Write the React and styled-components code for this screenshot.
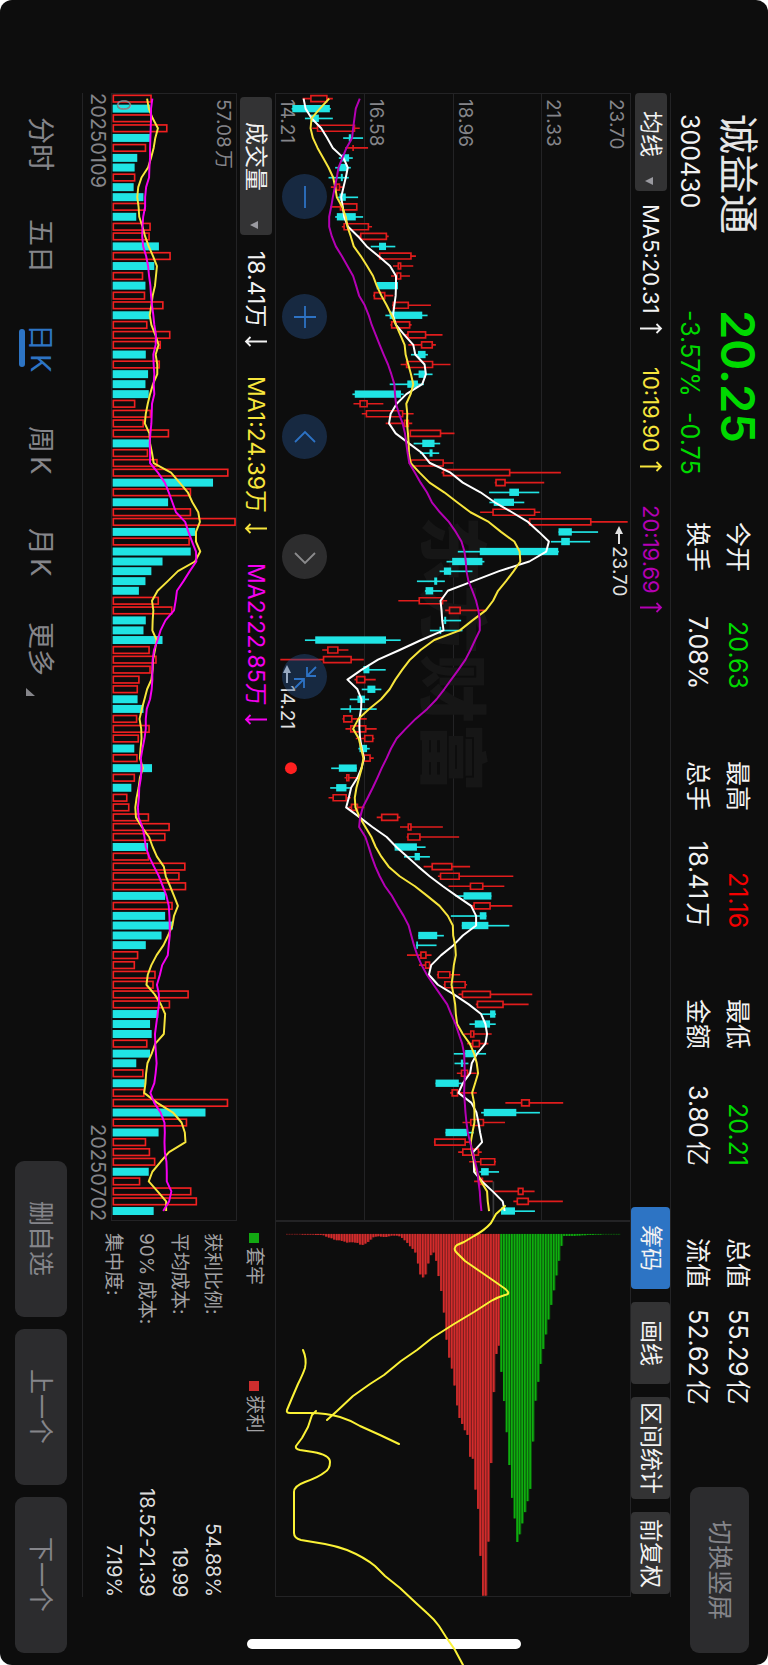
import React from "react";
import styled, { createGlobalStyle, css } from "styled-components";

/* ---------- theme values ---------- */

const c = {
  bg: "#0d0d0d",
  line: "#232325",
  text: "#f2f2f2",
  dim: "#85858a",
  button: "#2c2c2e",
  chipButton: "#333334",
  blue: "#2d74c4",
  up: "#e01c1c",
  down: "#20e4e4",
  green: "#00d900",
  red: "#f40000",
  yellow: "#f7e53c",
  purple: "#b400b4",
  magenta: "#f500f0",
};

/* ---------- chart data ---------- */

// One row per trading day: low, body start, body end, high, falling (1) or rising (0).
const CANDLES = [
  [80,103,155,171,0],[47,49,162,165,1],[87,105,129,171,1],[109,123,238,252,0],[202,219,226,262,1],
  [208,230,234,277,0],[189,198,220,231,1],[178,190,214,225,1],[158,195,201,219,1],[165,180,193,205,0],
  [187,191,210,247,1],[167,192,245,245,0],[178,183,240,262,1],[198,203,280,289,0],[245,253,334,339,0],
  [285,310,331,359,1],[305,310,408,421,0],[352,366,377,413,0],[346,362,377,403,0],[303,303,367,367,1],
  [292,294,329,353,0],[349,351,400,466,0],[329,342,440,456,1],[344,346,404,408,0],[388,395,452,501,0],
  [398,436,472,481,0],[406,427,450,457,1],[375,391,473,525,0],[414,429,450,471,1],[342,395,427,445,1],
  [230,237,376,384,1],[233,251,276,323,0],[258,270,383,414,0],[330,385,400,410,0],[402,402,497,537,0],
  [414,440,477,494,1],[433,462,471,491,1],[399,405,505,534,0],[498,502,705,857,0],[658,660,691,807,0],
  [641,702,731,792,1],[642,655,716,747,1],[614,651,780,795,0],[759,761,949,1058,0],[850,850,890,969,1],
  [827,858,884,945,1],[547,613,849,851,1],[513,530,621,627,1],[492,505,527,591,1],[424,476,485,508,1],
  [448,450,473,501,1],[368,429,503,515,0],[509,520,556,629,0],[502,506,512,557,1],[463,492,497,561,1],
  [87,118,331,375,1],[139,154,188,218,0],[13,141,228,264,0],[260,263,281,330,1],[236,241,269,300,0],
  [258,275,299,317,1],[222,245,268,280,1],[194,221,226,303,1],[200,202,230,273,0],[209,223,272,303,0],
  [240,265,293,296,0],[248,251,274,282,1],[260,263,285,294,0],[166,189,243,243,1],[206,211,221,245,0],
  [163,181,212,228,1],[158,170,213,225,0],[218,225,247,266,0],[303,316,368,374,0],[373,396,408,502,0],
  [393,395,435,551,0],[357,357,424,450,1],[385,417,433,463,1],[444,468,531,584,0],[487,493,553,714,0],
  [519,583,624,687,0],[540,564,648,648,1],[588,594,646,711,0],[526,613,633,633,1],[559,559,639,702,1],
  [428,428,485,505,1],[421,422,427,483,1],[394,434,453,468,0],[430,448,464,469,0],[484,486,525,554,0],
  [504,506,571,575,0],[549,559,647,771,0],[601,604,685,760,0],[617,644,660,662,1],[582,598,644,661,1],
  [566,584,597,649,0],[575,590,614,639,0],[535,569,602,632,1],[537,556,563,579,1],[544,556,578,604,0],
  [480,480,550,559,1],[524,528,548,604,0],[690,737,764,864,0],[617,625,723,794,1],[561,584,626,689,0],
  [510,510,575,595,1],[475,476,571,583,0],[548,560,611,619,0],[581,614,660,662,0],[612,617,640,671,1],
  [596,611,623,652,0],[657,727,745,778,0],[714,724,761,863,0],[677,677,719,779,1],
];

const MA5 = [83,89,107,136,154,171,203,216,210,203,196,201,205,217,247,273,308,343,361,361,360,356,352,361,386,413,419,447,451,440,392,363,345,340,360,400,439,463,525,562,615,658,710,758,791,821,813,762,671,593,517,495,498,500,504,437,372,307,258,215,245,257,256,251,251,253,258,265,257,245,226,219,211,252,290,333,362,395,428,462,502,543,587,602,602,562,534,497,467,460,487,535,580,617,630,635,630,605,589,584,562,549,588,603,609,614,620,593,595,596,620,652,682,688];
const MA10 = [160,132,107,104,111,125,142,158,172,178,183,199,210,215,225,234,255,274,292,303,317,333,348,361,374,387,390,398,406,413,405,392,395,394,397,399,400,405,432,462,506,545,585,640,677,717,733,735,715,692,668,653,631,591,553,476,435,403,380,359,342,316,280,248,232,249,256,263,258,250,242,237,239,252,269,287,300,317,339,372,418,455,492,517,532,533,539,541,535,532,528,534,539,541,545,562,583,596,604,608,599,590,596,597,597,591,586,589,597,603,617,635,637,641];
const MA20 = [252,240,236,232,229,212,200,188,183,177,171,166,160,160,168,180,198,215,232,241,250,267,279,288,300,312,324,337,347,356,358,361,370,381,388,392,396,401,418,435,454,469,493,520,541,558,567,571,573,579,591,602,609,613,613,599,585,570,549,527,506,483,455,420,390,363,346,333,318,305,291,276,261,253,250,269,279,288,299,312,328,349,366,384,399,407,415,425,438,454,474,494,515,527,540,550,560,566,567,568,567,566,568,570,573,577,584,591,599,606,609,613,615,618];

const VOLUMES = [455,450,455,503,450,438,411,403,405,400,430,437,408,452,449,477,513,463,429,436,435,491,450,442,512,483,437,480,444,436,446,405,453,431,508,447,444,473,689,642,575,505,575,711,588,571,574,488,454,436,416,477,518,437,430,488,449,470,452,418,413,412,430,411,449,416,402,412,456,404,393,381,387,447,510,497,444,447,558,540,560,496,519,496,520,485,437,414,404,467,461,568,511,475,450,455,442,450,408,430,434,433,688,619,563,476,438,450,466,446,420,576,593,461];
const FALLING_DAYS = new Set([1,4,6,7,9,10,12,15,17,19,22,26,28,29,30,35,39,41,44,46,47,48,49,50,53,54,55,61,62,66,68,70,76,81,83,84,85,86,93,94,95,97,98,100,103,105,109,113]);
const VOL_MA1 = [441,446,458,474,466,461,453,444,424,414,411,415,417,427,435,446,459,471,468,465,458,454,449,454,466,476,467,472,472,459,450,443,437,434,448,450,456,461,514,540,565,579,597,602,590,590,603,587,535,504,473,456,460,458,457,470,465,459,458,454,441,433,425,418,423,424,421,419,428,419,415,409,405,407,425,447,458,471,492,498,511,523,535,523,518,505,491,470,454,443,439,464,483,496,494,492,466,455,442,438,436,432,472,520,546,556,558,508,482,457,446,473,499,499];
const VOL_MA2 = [457,453,453,452,451,450,450,448,447,438,435,435,429,427,426,429,438,444,447,451,453,456,460,463,468,467,460,461,463,461,463,456,455,454,451,449,450,450,474,495,507,518,529,557,567,578,590,591,571,552,532,528,523,497,482,473,462,458,457,457,455,450,440,437,437,433,427,422,424,422,417,416,413,415,427,433,437,447,462,477,489,500,507,509,510,510,507,504,487,480,471,477,477,473,469,465,466,468,470,467,463,451,463,482,494,495,494,495,500,501,501,515,508,490];

const CHIPS_PROFIT = [1,1,1,1,1,1,2,2,2,2,2,3,3,3,4,8,11,13,17,19,19,21,23,26,25,25,26,27,32,33,29,24,17,10,8,7,8,9,9,7,5,5,5,7,12,19,27,37,45,56,89,122,131,122,89,64,56,81,127,172,237,319,373,406,457,517,555,573,592,606,672,678,771,829,971,1091,1091,928,691,477,362,337];
const CHIPS_TRAPPED = [416,504,598,697,796,858,929,906,873,839,806,769,626,503,446,392,347,303,258,214,170,125,81,36,6,6,6,6,6,5,5,4,4,3,3,3,2,2,2,1,1,1,1,1,1,1];

const STEP = 29.586;
const dayY = (i) => Math.round(14 + i * STEP);
const toPoints = (values) => values.map((v, i) => `${v},${dayY(i)}`).join(" ");

/* ---------- page frame ---------- */

const Global = createGlobalStyle`
  * { box-sizing: border-box; }
  body { margin: 0; background: #fff; }
  button, select { font: inherit; color: inherit; border: 0; padding: 0; margin: 0; cursor: pointer; writing-mode: inherit; text-orientation: inherit; }
  dl, dt, dd, h1, p { margin: 0; font-weight: 400; }
`;

const Screen = styled.div`
  position: relative;
  writing-mode: vertical-rl;
  text-orientation: sideways;
  display: flex;
  flex-direction: column;
  inline-size: 100vh;
  min-inline-size: 1500px;
  block-size: 100vw;
  min-block-size: 640px;
  overflow: hidden;
  border-radius: 12px;
  background: ${c.bg};
  color: ${c.text};
  font-family: Inter, "Noto Sans CJK SC", sans-serif;
  font-size: 22px;
  line-height: 32px;
  white-space: nowrap;
`;

/* ---------- header ---------- */

const Header = styled.header`
  flex: none;
  display: flex;
  block-size: 97px;
  padding-inline: 114px 12px;
`;

const Title = styled.div`
  flex: none;
  inline-size: ${(p) => p.$w}px;
  padding-block-start: 6px;
`;

const StockName = styled.h1`
  font-size: 40px;
  line-height: 48px;
  color: #e6e6e6;
`;

const StockCode = styled.p`
  margin-block-start: 8px;
  font-size: 25px;
`;

const Price = styled.p`
  font-size: 47px;
  line-height: 48px;
  font-weight: 600;
  color: ${c.green};
`;

const Change = styled.p`
  display: flex;
  gap: 15px;
  margin-block-start: 8px;
  font-size: 25px;
  color: ${c.green};
`;

const Stats = styled.dl`
  flex: 1;
  display: flex;
  justify-content: space-between;
  padding-block-start: 10px;
  padding-inline-end: 82px;
  text-autospace: normal;
`;

const StatGroup = styled.div`
  inline-size: 167px;
`;

const Stat = styled.div`
  display: flex;
  justify-content: space-between;
  font-size: 25px;
  line-height: 40px;
  dd { color: ${(p) => p.$color || c.text}; }
`;

const GreyButton = styled.button`
  flex: none;
  inline-size: ${(p) => p.$w}px;
  block-size: ${(p) => p.$h}px;
  border-radius: 9px;
  background: ${c.button};
  color: ${c.dim};
  font-size: 25px;
`;

const SwitchSlot = styled.div`
  padding-block-start: 19px;
`;

/* ---------- content ---------- */

const Content = styled.main`
  flex: 1;
  min-block-size: 0;
  display: flex;
  flex-direction: column;
  margin-inline: 93px 68px;
  border-block: 1px solid ${c.line};
`;

const Bar = styled.div`
  flex: none;
  display: flex;
  align-items: center;
  gap: ${(p) => p.$gap}px;
  block-size: ${(p) => p.$h}px;
`;

const Picker = styled.label`
  position: relative;
  flex: none;
  inline-size: ${(p) => p.$w}px;
  block-size: 32px;
  margin-inline-start: ${(p) => p.$inset}px;
  svg {
    position: absolute;
    inset-block-start: 14px;
    inset-inline-end: 6px;
    pointer-events: none;
  }
`;

const PickerSelect = styled.select`
  appearance: none;
  inline-size: 100%;
  block-size: 100%;
  padding-inline-start: ${(p) => p.$pad}px;
  border-radius: 4px;
  background: ${c.chipButton};
  font-size: 23px;
  line-height: 32px;
`;

const Readings = styled.div`
  display: flex;
  gap: ${(p) => p.$gap}px;
  font-size: ${(p) => p.$size}px;
`;

const Reading = styled.span`
  display: flex;
  align-items: center;
  gap: 9px;
  color: ${(p) => p.$color};
`;

const Tools = styled.div`
  display: flex;
  align-self: stretch;
  gap: 13px;
  margin-inline: auto 3px;
`;

const ToolButton = styled.button`
  inline-size: ${(p) => (p.$wide ? 102 : 82)}px;
  border-radius: 4px;
  background: ${(p) => (p.$active ? c.blue : c.chipButton)};
  font-size: 23px;
`;

const Columns = styled.div`
  flex: 1;
  min-block-size: 0;
  display: flex;
`;

const ChartColumn = styled.section`
  flex: 3;
  display: flex;
  flex-direction: column;
`;

const SideColumn = styled.section`
  flex: 1;
  display: flex;
  flex-direction: column;
`;

const Plot = styled.div`
  position: relative;
  flex: 1;
  min-block-size: 0;
  display: flex;
  flex-direction: column;
  border: 1px solid ${c.line};
  font-size: 19px;
  line-height: 22px;
  color: ${c.dim};
`;

const VolumePlot = styled(Plot)`
  flex: none;
  block-size: 126px;
  justify-content: space-between;
  padding-inline-start: 5px;
  padding-block: 2px 0;
  text-autospace: normal;
  span { position: relative; }
`;

const Band = styled.div`
  flex: 1;
  display: flex;
  flex-direction: column;
  justify-content: space-between;
  padding-inline-start: 5px;
  padding-block: 3px 0;
  & + & { border-block-start: 1px solid ${c.line}; }
`;

const Watermark = styled.span`
  position: absolute;
  inset-block-start: 40%;
  inset-inline-start: 37.5%;
  font-size: 69px;
  line-height: 72px;
  font-weight: 900;
  color: #161616;
`;

const Layer = styled.svg`
  position: absolute;
  inset: 0;
  width: 100%;
  height: 100%;
  overflow: visible;
  pointer-events: none;
`;

const Note = styled.span`
  position: absolute;
  inset-inline-start: ${(p) => p.$at}%;
  inset-block-${(p) => p.$edge}: 0;
  display: flex;
  align-items: center;
  gap: 2px;
  color: #e2e2e2;
`;

const RoundButtons = styled.div`
  position: absolute;
  inset-block-end: 6px;
  inset-inline-start: 80px;
  display: flex;
  gap: 75px;
`;

const RoundButton = styled.button`
  inline-size: 45px;
  block-size: 45px;
  border-radius: 50%;
  display: grid;
  place-items: center;
  background: ${(p) => (p.$muted ? "rgba(95, 95, 98, 0.4)" : "rgba(40, 85, 145, 0.4)")};
  color: ${(p) => (p.$muted ? "#8b8b8d" : "#2d72c4")};
`;

const Dates = styled.div`
  flex: none;
  display: flex;
  justify-content: space-between;
  block-size: 28px;
  font-size: 20px;
  line-height: 26px;
  color: ${c.dim};
`;

const Details = styled.div`
  flex: none;
  block-size: 192px;
  padding-inline-start: 12px;
  font-size: 19px;
  line-height: 33px;
  color: #a2a2a4;
`;

const Legend = styled.div`
  display: flex;
  line-height: 42px;
  margin-block-end: 4px;
`;

const LegendItem = styled.span`
  inline-size: 148px;
  display: flex;
  align-items: center;
  gap: 4px;
  font-size: 19px;
  &::before {
    content: "";
    inline-size: 10px;
    block-size: 10px;
    background: ${(p) => p.$color};
  }
`;

const DetailRow = styled.div`
  display: flex;
  justify-content: space-between;
  dd { font-size: 20px; color: #dcdcdc; }
`;

/* ---------- footer ---------- */

const Footer = styled.footer`
  flex: none;
  display: flex;
  justify-content: space-between;
  align-items: center;
  block-size: 82px;
  padding-inline: 93px 12px;
`;

const Periods = styled.nav`
  display: flex;
  text-autospace: normal;
`;

const Period = styled.button`
  position: relative;
  inline-size: 102px;
  block-size: 44px;
  padding-block-start: 2px;
  padding-inline-end: ${(p) => (p.$more ? 11 : 0)}px;
  background: none;
  font-size: 27px;
  color: ${(p) => (p.$active ? c.blue : c.dim)};
  ${(p) =>
    p.$active &&
    css`
      &::after {
        content: "";
        position: absolute;
        inset-inline: 32px;
        inset-block-end: 0;
        block-size: 6px;
        border-radius: 3px;
        background: ${c.blue};
      }
    `}
  svg {
    position: absolute;
    inset-inline-end: 9px;
    inset-block-end: 7px;
  }
`;

const Pager = styled.div`
  display: flex;
  gap: 12px;
`;

const HomeBar = styled.div`
  position: absolute;
  inset-inline-end: 16px;
  inset-block-start: 32.2%;
  inline-size: 10px;
  block-size: 35.7%;
  border-radius: 5px;
  background: #fff;
`;

/* ---------- drawings ---------- */

const Caret = () => (
  <svg width="8" height="8" viewBox="0 0 8 8" aria-hidden="true">
    <path d="M0 4L8 0V8Z" fill="#9a9aa0" />
  </svg>
);

const Trend = ({ down }) => (
  <svg width="24" height="11" viewBox="0 0 24 11" fill="none" stroke="currentColor" strokeWidth="1.8" aria-hidden="true">
    {down ? <path d="M23 5.5H2M6.5 1L2 5.5L6.5 10" /> : <path d="M1 5.5H22M17.5 1L22 5.5L17.5 10" />}
  </svg>
);

const NoteArrow = () => (
  <svg width="10" height="18" viewBox="0 0 10 18" aria-hidden="true">
    <path d="M5 0L9 8H6V18H4V8H1Z" fill="currentColor" />
  </svg>
);

const ICONS = {
  out: "M15 4V26",
  in: "M15 4V26M4 15H26",
  prev: "M5 20L15 10L25 20",
  next: "M5 11L15 21L25 11",
  fit: "M17 5V14H26M17 14L26 5M4 17H14V26M14 17L5 26",
};

const RoundIcon = ({ name }) => (
  <svg width="30" height="30" viewBox="0 0 30 30" fill="none" stroke="currentColor" strokeWidth="1.8" aria-hidden="true">
    <path d={ICONS[name]} />
  </svg>
);

const Candle = ({ row, index }) => {
  const [low, start, end, high, falling] = row;
  const y = dayY(index);
  if (falling) {
    return (
      <g fill={c.down}>
        <rect x={low} y={y - 2} width={high - low} height="5" />
        <rect x={start} y={y - 11} width={end - start} height="22" />
      </g>
    );
  }
  return (
    <path
      d={`M${low} ${y}H${start}M${end} ${y}H${high}M${start + 2} ${y - 9}H${end - 2}V${y + 9}H${start + 2}Z`}
      fill="none"
      stroke={c.up}
      strokeWidth="5"
    />
  );
};

const PriceLayer = () => (
  <Layer viewBox="0 0 1065 3384" preserveAspectRatio="none" role="img" aria-label="日K线图">
    <path d="M654 3268V3384" stroke="#3a3a3c" strokeWidth="5" />
    {CANDLES.map((row, i) => (
      <Candle key={i} row={row} index={i} />
    ))}
    <g fill="none" strokeWidth="6" strokeLinejoin="round">
      <polyline points={toPoints(MA5)} stroke="#fff" />
      <polyline points={toPoints(MA10)} stroke={c.yellow} />
      <polyline points={toPoints(MA20)} stroke={c.purple} />
    </g>
    <circle cx="45" cy="2026" r="18" fill="#ff2020" />
  </Layer>
);

const VOLUME_BASE = 336;

const VolumeLayer = () => (
  <Layer viewBox="334 0 378 3384" preserveAspectRatio="none" role="img" aria-label="成交量">
    {VOLUMES.map((end, i) =>
      FALLING_DAYS.has(i) ? (
        <rect key={i} x={VOLUME_BASE} y={dayY(i) - 12} width={end - VOLUME_BASE} height="24" fill={c.down} />
      ) : (
        <rect key={i} x={VOLUME_BASE + 2} y={dayY(i) - 10} width={end - VOLUME_BASE - 4} height="20" fill="none" stroke="#f02020" strokeWidth="5" />
      )
    )}
    <g fill="none" strokeWidth="6" strokeLinejoin="round">
      <polyline points={toPoints(VOL_MA1)} stroke={c.yellow} />
      <polyline points={toPoints(VOL_MA2)} stroke={c.magenta} />
    </g>
  </Layer>
);

const CHIP_STEP = 7.87;

const ChipBars = ({ values, first, color, back }) => {
  const x = (i) => Math.round(30 + (first + i) * CHIP_STEP);
  return (
    <>
      {values.map((v, i) => (
        <g key={i}>
          <rect x={x(i)} y="36" width="8" height={v} fill={back} />
          <rect x={x(i)} y="36" width="5" height={v} fill={color} />
        </g>
      ))}
    </>
  );
};

const ChipLayer = () => (
  <Layer viewBox="0 0 1065 1128" preserveAspectRatio="none" role="img" aria-label="筹码分布">
    <ChipBars values={CHIPS_PROFIT} first={0} color="#d42c2c" back="#7c1f1f" />
    <ChipBars values={CHIPS_TRAPPED} first={CHIPS_PROFIT.length} color="#0fae0f" back="#0c580c" />
  </Layer>
);

const SketchLayer = () => (
  <Layer viewBox="0 0 768 1665" preserveAspectRatio="none" aria-hidden="true">
    <g fill="none" stroke="#fbf236" strokeWidth="2" strokeLinejoin="round" strokeLinecap="round">
      <path d="M505 1206L496 1214L491 1223Q485 1230 474 1236L464 1242L457 1245Q453 1248 456 1252L465 1261L481 1272L494 1281L504 1288Q512 1294 505 1295Q498 1297 491 1301L474 1312L454 1324L432 1338L417 1350L401 1361L384 1375L370 1384L353 1396L337 1411L327 1420" />
      <path d="M303 1350Q307 1359 305 1368Q303 1374 298 1384L292 1398L287 1410Q286 1413 290 1413H310Q326 1413 340 1417Q350 1420 360 1426L380 1435L399 1444" />
      <path d="M316 1411L312 1415L308 1427L302 1438L296 1446Q295 1449 300 1450L313 1452Q330 1455 330 1462Q330 1469 325 1472Q319 1477 305 1482Q294 1486 294 1492V1533Q294 1538 301 1540L325 1544Q336 1546 347 1550Q364 1557 375 1566L385 1576L400 1588L416 1603L427 1613Q434 1619 439 1626L446 1637L455 1650L463 1665" />
    </g>
  </Layer>
);

/* ---------- content data ---------- */

const STATS = [
  [["今开", "20.63", c.green], ["换手", "7.08%"]],
  [["最高", "21.16", c.red], ["总手", "18.41万"]],
  [["最低", "20.21", c.green], ["金额", "3.80亿"]],
  [["总值", "55.29亿"], ["流值", "52.62亿"]],
];

const ROUND = [["out", "缩小"], ["in", "放大"], ["prev", "左移"], ["next", "右移"], ["fit", "收起"]];

export default function App() {
  return (
    <Screen>
      <Global />
      <Header>
        <Title $w={196}>
          <StockName>诚益通</StockName>
          <StockCode>300430</StockCode>
        </Title>
        <Title $w={212}>
          <Price>20.25</Price>
          <Change>
            <span>-3.57%</span>
            <span>-0.75</span>
          </Change>
        </Title>
        <Stats>
          {STATS.map((group, i) => (
            <StatGroup key={i}>
              {group.map(([label, value, color]) => (
                <Stat key={label} $color={color}>
                  <dt>{label}</dt>
                  <dd>{value}</dd>
                </Stat>
              ))}
            </StatGroup>
          ))}
        </Stats>
        <SwitchSlot>
          <GreyButton $w={166} $h={59}>切换竖屏</GreyButton>
        </SwitchSlot>
      </Header>

      <Content>
        <Bar $gap={13} $h={39}>
          <Picker $w={98} $inset={0}>
            <PickerSelect $pad={18} aria-label="主图指标" defaultValue="均线">
              <option>均线</option>
            </PickerSelect>
            <Caret />
          </Picker>
          <Readings $gap={33} $size={22}>
            <Reading $color={c.text}>MA5:20.31<Trend /></Reading>
            <Reading $color={c.yellow}>10:19.90<Trend /></Reading>
            <Reading $color={c.purple}>20:19.69<Trend /></Reading>
          </Readings>
          <Tools>
            <ToolButton $active>筹码</ToolButton>
            <ToolButton>画线</ToolButton>
            <ToolButton $wide>区间统计</ToolButton>
            <ToolButton>前复权</ToolButton>
          </Tools>
        </Bar>

        <Columns>
          <ChartColumn>
            <Plot>
              <Band><span>23.70</span><span>21.33</span></Band>
              <Band><span /><span>18.96</span></Band>
              <Band><span /><span>16.58</span></Band>
              <Band><span /><span>14.21</span></Band>
              <Watermark>东方财富</Watermark>
              <PriceLayer />
              <Note $at={38.4} $edge="start"><NoteArrow />23.70</Note>
              <Note $at={50.7} $edge="end"><NoteArrow />14.21</Note>
              <RoundButtons>
                {ROUND.map(([name, label]) => (
                  <RoundButton key={name} $muted={name === "next"} aria-label={label}>
                    <RoundIcon name={name} />
                  </RoundButton>
                ))}
              </RoundButtons>
            </Plot>
            <Bar $gap={16} $h={38}>
              <Picker $w={138} $inset={4}>
                <PickerSelect $pad={25} aria-label="副图指标" defaultValue="成交量">
                  <option>成交量</option>
                </PickerSelect>
                <Caret />
              </Picker>
              <Readings $gap={29} $size={23}>
                <Reading $color={c.text}>18.41万<Trend down /></Reading>
                <Reading $color={c.yellow}>MA1:24.39万<Trend down /></Reading>
                <Reading $color={c.magenta}>MA2:22.85万<Trend down /></Reading>
              </Readings>
            </Bar>
            <VolumePlot>
              <VolumeLayer />
              <span>57.08万</span>
              <span>0</span>
            </VolumePlot>
            <Dates>
              <span>20250109</span>
              <span>20250702</span>
            </Dates>
          </ChartColumn>

          <SideColumn>
            <Plot>
              <ChipLayer />
            </Plot>
            <Details>
              <Legend>
                <LegendItem $color="#12a812">套牢</LegendItem>
                <LegendItem $color="#cf2e2e">获利</LegendItem>
              </Legend>
              <dl>
                <DetailRow><dt>获利比例:</dt><dd>54.88%</dd></DetailRow>
                <DetailRow><dt>平均成本:</dt><dd>19.99</dd></DetailRow>
                <DetailRow><dt>90% 成本:</dt><dd>18.52-21.39</dd></DetailRow>
                <DetailRow><dt>集中度:</dt><dd>7.19%</dd></DetailRow>
              </dl>
            </Details>
          </SideColumn>
        </Columns>
      </Content>

      <Footer>
        <Periods>
          <Period>分时</Period>
          <Period>五日</Period>
          <Period $active>日K</Period>
          <Period>周K</Period>
          <Period>月K</Period>
          <Period $more>
            更多
            <svg width="9" height="8" viewBox="0 0 9 8" aria-hidden="true">
              <path d="M0 0V8H9Z" fill="currentColor" />
            </svg>
          </Period>
        </Periods>
        <Pager>
          <GreyButton $w={156} $h={52}>删自选</GreyButton>
          <GreyButton $w={156} $h={52}>上一个</GreyButton>
          <GreyButton $w={156} $h={52}>下一个</GreyButton>
        </Pager>
      </Footer>

      <HomeBar />
      <SketchLayer />
    </Screen>
  );
}
